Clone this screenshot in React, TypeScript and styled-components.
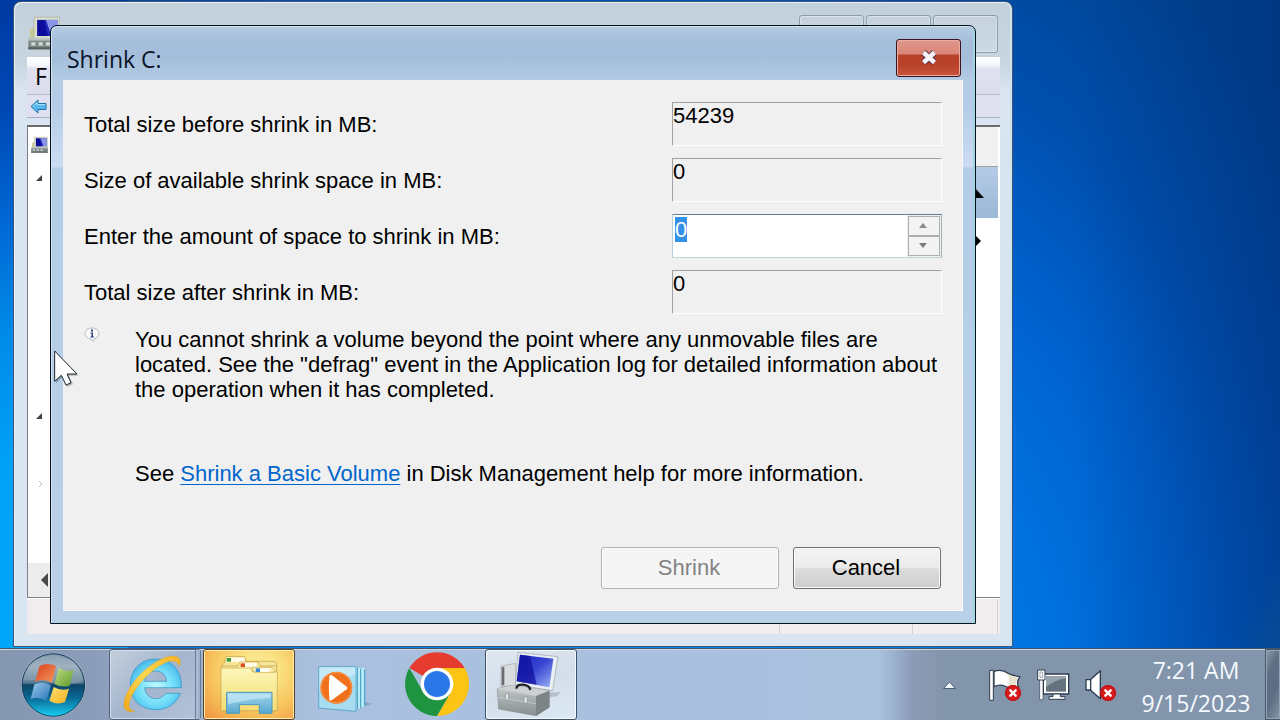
import React, { useEffect, useRef } from "react";
import styled, { createGlobalStyle } from "styled-components";

const GlobalStyle = createGlobalStyle`
  * { box-sizing: border-box; }
  body {
    margin: 0;
    font-family: "Liberation Sans", Arial, sans-serif;
    color: #000;
  }
  svg { display: block; }
`;

const uiFont = `"Open Sans", "Noto Sans", sans-serif`;
const textSize = "22px";
const lineSize = "25px";

/* ---------- desktop ---------- */

const Screen = styled.div`
  display: flex;
  flex-direction: column;
  min-height: 100vh;
  overflow: hidden;
  background:
    linear-gradient(180deg, #0039a2 0%, #0048b4 15%, #0066d2 30%, #008ae8 46%, #00a2f8 65%, #00a8fa 100%) left top / 10% 100% no-repeat,
    linear-gradient(122deg, transparent 94%, rgba(40, 110, 130, 0.35) 100%),
    linear-gradient(90deg, transparent 84%, rgba(0, 40, 110, 0.45) 100%),
    radial-gradient(ellipse 75% 130% at 45% 100%, #008cf4 0%, #007ee8 35%, #0074e0 48%, #0060cc 66%, #0050b0 80%, #004594 100%);
`;

const Desktop = styled.main`
  position: relative;
  flex: 1;
  min-height: 640px;
`;

/* ---------- management console window ---------- */

const ConsoleWindow = styled.section`
  position: absolute;
  inset: 1px 267px 1px 13px;
  display: flex;
  flex-direction: column;
  padding: 0 12px 12px 13px;
  border: 1px solid #3f5470;
  border-radius: 8px 8px 0 0;
  background: linear-gradient(180deg, #c3d1dc 0, #c8d5e1 60px, #dbe4f2 90px, #d8e5f1 140px, #d9e6f1 100%);
  box-shadow: inset 1px 1px 0 #e8f0f6, inset -2px 0 0 #d0e4f0;
`;

const ConsoleTitle = styled.header`
  display: flex;
  justify-content: space-between;
  align-items: flex-start;
  height: 55px;
  padding: 13px 2px 0 1px;
`;

const CaptionGroup = styled.div`
  display: flex;
  gap: 2px;
`;

const CaptionButton = styled.button`
  width: 65px;
  height: 38px;
  padding: 0;
  border: 1px solid #8c9db0;
  border-radius: 3px;
  background: linear-gradient(#c6d3df, #cbd8e5);
  box-shadow: inset 0 0 0 1px #d8e3ec;
`;

const MenuBar = styled.nav`
  display: flex;
  align-items: center;
  height: 38px;
  padding: 0 8px;
  border-bottom: 1px solid #b4b9cc;
  background: linear-gradient(#fff 0, #f5f7fc 8px, #e0e1ef 12px, #dcdcec 100%);
  font: 23px/32px ${uiFont};
`;

const ToolBar = styled.div`
  display: flex;
  align-items: center;
  height: 23px;
  padding: 0 3px;
  border-bottom: 1px solid #a9afc0;
  background: #dfe1f1;
`;

const Panes = styled.div`
  display: flex;
  flex: 1;
  margin-top: 7px;
  border: 1px solid #7d8085;
  border-top: 2px solid #6c6c6c;
  border-right: 0;
  background: #fff;
`;

const TreePane = styled.div`
  display: flex;
  flex-direction: column;
  justify-content: space-between;
  width: 240px;
`;

const Tree = styled.ul`
  margin: 0;
  padding: 0;
  list-style: none;
`;

const TreeRow = styled.li`
  display: flex;
  align-items: center;
  height: 34px;
  padding-left: 3px;
`;

const HorizontalScroll = styled.div`
  display: flex;
  align-items: center;
  height: 34px;
  padding-left: 12px;
  background: #ececec;
`;

const ActionsPane = styled.aside`
  width: 240px;
  margin: 0 2px 0 auto;
  background: #fff;
`;

const ActionsTitle = styled.div`
  height: 40px;
  border-bottom: 1px solid #a0a0a0;
  background: #f0f0f0;
`;

const ActionsRow = styled.div<{ $active?: boolean }>`
  display: flex;
  align-items: center;
  justify-content: flex-end;
  height: ${(p) => (p.$active ? "51px" : "45px")};
  padding-right: ${(p) => (p.$active ? "14px" : "17px")};
  background: ${(p) => (p.$active ? "linear-gradient(#b4cbe6, #9bb8d6)" : "#fff")};
`;

const StatusBar = styled.footer`
  display: grid;
  grid-template-columns: 1fr 133px 85px 2px;
  height: 36px;
  border-top: 1px solid #fff;
  background: #f1edee;
`;

const StatusCell = styled.div`
  border-right: 1px solid #d5d2d3;
`;

/* ---------- shrink dialog ---------- */

const DialogFrame = styled.section`
  position: absolute;
  top: 25px;
  left: 50px;
  right: 304px;
  padding: 0 12px 12px;
  border: 1px solid #06121e;
  border-radius: 7px 7px 0 0;
  background: linear-gradient(180deg, #b5cbe1 0, #a4bedb 16px, #a4bedb 32px, #b3cbe4 54px, #b4cce8 80px, #ccdcf2 140px, #b3cde8 143px, #bad0e8 100%);
  box-shadow: inset 1px 1px 0 #d4e3ee, inset -2px -1px 0 #a2d4e2;
`;

const DialogTitle = styled.header`
  display: flex;
  justify-content: space-between;
  align-items: flex-start;
  height: 54px;
  padding: 13px 2px 0 4px;
`;

const TitleText = styled.h1`
  margin: 4px 0 0;
  font: 400 23px/32px ${uiFont};
  color: #0a1428;
`;

const CloseButton = styled.button`
  display: flex;
  align-items: center;
  justify-content: center;
  width: 65px;
  height: 38px;
  padding: 0 0 2px;
  border: 1px solid #3c1420;
  border-radius: 3px;
  background: linear-gradient(#e0988c 0, #da8578 14px, #b8412a 15px, #b8412a 24px, #c9543c 100%);
  box-shadow: inset 0 0 0 1px #e9aca0;
`;

const DialogBody = styled.form`
  padding: 22px 21px;
  background: #f0f0f0;
  box-shadow: inset -1px -1px 0 #f8fafc;
  font-size: ${textSize};
  line-height: ${lineSize};
`;

const Fields = styled.div`
  display: grid;
  grid-template-columns: 1fr 270px;
  gap: 12px 20px;
`;

const FieldLabel = styled.label`
  align-self: center;
`;

const Readout = styled.output`
  height: 44px;
  border: 1px solid;
  border-color: #a0a0a0 #fff #fff #a0a0a0;
`;

const SpinBox = styled.div`
  display: flex;
  height: 44px;
  border: 1px solid;
  border-color: #5d7f90 #a5b0b5 #c2d5d5 #b4cdd8;
  background: #fff;
`;

const SpinInput = styled.input`
  flex: 1;
  min-width: 0;
  margin: 0;
  padding: 2px 2px 15px;
  border: 0;
  outline: 0;
  background: transparent;
  color: #000;
  font: inherit;
  caret-color: transparent;
  &::selection { background: #3391ea; color: #fff; }
`;

const SpinButtons = styled.div`
  display: grid;
  grid-template-rows: 1fr 1fr;
  width: 34px;
  padding: 1px;
  background: #f0f0f0;
`;

const SpinButton = styled.button`
  display: flex;
  align-items: center;
  justify-content: center;
  padding: 0 2px 2px 0;
  border: 1px solid #adb0b2;
  background: #f3f3f3;
`;

const Note = styled.div`
  display: grid;
  grid-template-columns: 16px 1fr;
  gap: 35px;
  margin-top: 13px;
`;

const NoteText = styled.p`
  margin: 0;
`;

const HelpText = styled.p`
  margin: 59px 0 0 51px;
`;

const HelpLink = styled.a`
  color: #0066cc;
  text-decoration: underline;
  text-decoration-thickness: 1px;
  text-underline-offset: 3px;
`;

const Actions = styled.div`
  display: flex;
  justify-content: flex-end;
  gap: 14px;
  margin: 61px 1px 0 0;
`;

const ActionButton = styled.button<{ $width: number }>`
  width: ${(p) => p.$width}px;
  height: 42px;
  padding: 0 2px 2px 0;
  border: 1px solid #707070;
  border-radius: 3px;
  background: linear-gradient(#f3f3f3 0, #ebebeb 48%, #dcdcdc 52%, #cecece 100%);
  box-shadow: inset 0 0 0 1px #fafafa;
  font: inherit;
  color: #000;
  &:disabled {
    border-color: #b0b4b6;
    background: #f5f5f5;
    color: #838383;
  }
`;

/* ---------- task bar ---------- */

const Taskbar = styled.footer`
  display: flex;
  height: 72px;
  border-top: 1px solid #45566c;
  box-shadow: inset 0 1px 0 #c9d6e2;
  background:
    linear-gradient(90deg, transparent calc(100% - 400px), #8c9cb8 calc(100% - 368px), #8395aa calc(100% - 335px), #8395ac 100%),
    linear-gradient(90deg, #8496b0 0, #8a9cb8 90px, #a0b3d0 200px, #a9c0de 320px, #a8c2de 100%);
`;

const StartButton = styled.button`
  width: 109px;
  padding: 0;
  border: 0;
  background: none;
`;

const TaskButtons = styled.div`
  display: flex;
  gap: 2px;
`;

const taskLooks = {
  plain: "background: none; border-color: transparent;",
  open: "background: linear-gradient(135deg, #c4cfdd, #a3b4cd 50%, #b4c4da); border-color: #4d607c; box-shadow: inset 0 0 0 1px #d3deea;",
  alert: "background: radial-gradient(ellipse at 60% 30%, #fbe88c 20%, #f7c55c 60%, #ef9040 100%); border-color: #5c4020; box-shadow: inset 0 0 0 1px #fff0b8;",
  active: "background: linear-gradient(160deg, #dfe8f0, #d3deeb 50%, #dce9f3); border-color: #3d5068; box-shadow: inset 0 0 0 1px #f4f9fc;",
};

const TaskButton = styled.button<{ $look: keyof typeof taskLooks }>`
  display: flex;
  justify-content: center;
  width: 92px;
  height: 71px;
  padding: 0;
  border: 1px solid;
  border-radius: 3px;
  ${(p) => taskLooks[p.$look]}
  & > svg { margin: -1px; flex: none; }
`;

const Tray = styled.div`
  display: flex;
  align-items: center;
  gap: 12px;
  margin-left: auto;
`;

const TrayButton = styled.button<{ $wide?: boolean }>`
  padding: 0;
  margin-right: ${(p) => (p.$wide ? "18px" : "0")};
  border: 0;
  background: none;
`;

const Clock = styled.time`
  width: 138px;
  margin-left: 8px;
  padding-top: 5px;
  font: 23px/33px ${uiFont};
  text-align: center;
  color: #f4faff;
`;

const ShowDesktop = styled.button`
  width: 15px;
  margin-left: 0;
  padding: 0;
  border: 1px solid #48586c;
  border-right-width: 0;
  background: linear-gradient(115deg, #8e9cac 0, #5e7084 30%, #5a6d82 60%, #8796a8 100%);
  box-shadow: inset 0 0 0 1px #94a4b5;
`;

const Pointer = styled.svg`
  position: absolute;
  left: 52px;
  top: 348px;
  pointer-events: none;
`;

/* ---------- drawings ---------- */

const ComputerIcon = ({ width, height }: { width: number; height: number }) => (
  <svg width={width} height={height} viewBox="84 50 96 100" preserveAspectRatio="none">
    <path d="M90 92l12-8v34H90z" fill="#c8cc94" />
    <path d="M102 56h76v66h-76z" fill="#d9dcc8" stroke="#a9ac9c" strokeWidth="2" />
    <path d="M112 64h62v46h-62z" fill="#2028b8" />
    <path d="M112 64h20l12 46h-32z" fill="#0c0c9a" />
    <path d="M138 64h36v46h-20z" fill="#8a94e8" />
    <path d="M85 120h94v28H85z" fill="#7e8a88" />
    <path d="M85 116h94v7H85z" fill="#b8c2c0" />
    <path d="M94 128h12v9H94zM116 128h12v9h-12zM138 128h12v9h-12z" fill="#d4dcda" />
    <path d="M85 142h94v6H85z" fill="#56605e" />
  </svg>
);

const BackIcon = () => (
  <svg width="17" height="15" viewBox="0 0 17 15">
    <path d="M1 7.500L8 1v3.500h8v6H8V14z" fill="#54b8ec" stroke="#2272a8" />
    <path d="M3 7.200l4-3.600v2h8" fill="none" stroke="#a8e4fa" />
  </svg>
);

const StartOrb = () => (
  <svg width="109" height="71" viewBox="0 27 327 213">
    <defs>
      <linearGradient id="orb" x1="0" y1="0" x2="0" y2="1">
        <stop offset="0" stopColor="#6f8ba0" />
        <stop offset=".2" stopColor="#8fa3b4" />
        <stop offset=".46" stopColor="#5c7d96" />
        <stop offset=".5" stopColor="#0e4468" />
        <stop offset=".72" stopColor="#0a6c98" />
        <stop offset="1" stopColor="#18d0f4" />
      </linearGradient>
      <linearGradient id="pr" x1="0" y1="0" x2="1" y2="1">
        <stop offset="0" stopColor="#d8401c" />
        <stop offset="1" stopColor="#f49a60" />
      </linearGradient>
      <linearGradient id="pg" x1="0" y1="0" x2="1" y2="1">
        <stop offset="0" stopColor="#c4dc88" />
        <stop offset="1" stopColor="#5a9c28" />
      </linearGradient>
      <linearGradient id="pb" x1="0" y1="0" x2="1" y2="1">
        <stop offset="0" stopColor="#9cc8ec" />
        <stop offset="1" stopColor="#2474b8" />
      </linearGradient>
      <linearGradient id="py" x1="0" y1="0" x2="1" y2="1">
        <stop offset="0" stopColor="#fce070" />
        <stop offset="1" stopColor="#f4b020" />
      </linearGradient>
    </defs>
    <circle cx="160" cy="135" r="97" fill="#b4cad8" />
    <circle cx="160" cy="135" r="94" fill="url(#orb)" stroke="#143c58" strokeWidth="3" />
    <path d="M70 122Q82 52 160 44Q238 52 250 122Q204 142 160 128Q112 116 70 122z" fill="#fff" opacity=".16" />
    <path d="M119 77Q144 66 168 78L156 128Q132 114 105 125Z" fill="url(#pr)" />
    <path d="M176 83Q198 98 221 90L209 137Q184 144 163 132Z" fill="url(#pg)" />
    <path d="M103 133Q130 122 153 136L140 183Q114 168 92 178Z" fill="url(#pb)" />
    <path d="M161 141Q184 154 207 146L195 186Q170 196 148 182Z" fill="url(#py)" />
  </svg>
);

const ExplorerEIcon = () => (
  <svg width="92" height="71" viewBox="327 27 276 213">
    <defs>
      <radialGradient id="ie" cx=".5" cy=".55" r=".6">
        <stop offset="0" stopColor="#c0f8ff" />
        <stop offset=".6" stopColor="#6fdcf8" />
        <stop offset="1" stopColor="#3cb0e4" />
      </radialGradient>
      <linearGradient id="ring" x1="0" y1="1" x2="1" y2="0">
        <stop offset="0" stopColor="#f0a818" />
        <stop offset=".5" stopColor="#fcd850" />
        <stop offset="1" stopColor="#f2b428" />
      </linearGradient>
    </defs>
    <path d="M591 29h10v208h-10z" fill="#9fb1cc" />
    <path d="M587 29v208" stroke="#5c6f8c" strokeWidth="3" />
    <path d="M591 29v208" stroke="#c8d5e4" strokeWidth="2" />
    <path
      d="M467 57C422 57 391 90 391 134C391 180 424 209 468 209C503 209 530 190 541 160H497C490 171 481 176 468 176C449 176 436 164 434 143H544C547 92 514 57 467 57ZM434 124C437 104 449 93 467 93C486 93 498 105 500 124Z"
      fill="url(#ie)"
      stroke="#2f8fc4"
      strokeWidth="2"
      fillRule="evenodd"
    />
    <path d="M405 213C385 219 370 212 372 190C376 146 432 77 492 54C522 42 543 49 541 68L538 79C534 64 518 57 496 68C449 89 396 151 388 188C384 204 391 211 405 213Z" fill="url(#ring)" stroke="#d89820" strokeWidth="1" />
  </svg>
);

const FolderIcon = () => (
  <svg width="92" height="71" viewBox="609 27 276 213">
    <defs>
      <linearGradient id="fold" x1="0" y1="0" x2="0" y2="1">
        <stop offset="0" stopColor="#fdf6b8" />
        <stop offset="1" stopColor="#f4dc74" />
      </linearGradient>
      <linearGradient id="clip" x1="0" y1="0" x2="0" y2="1">
        <stop offset="0" stopColor="#a4d8ee" />
        <stop offset="1" stopColor="#58a8d0" />
      </linearGradient>
    </defs>
    <path d="M664 80l8-10 6-20h56l4 14h82l10 4v144H664z" fill="#f6e69a" stroke="#bd9a3c" strokeWidth="2" />
    <path d="M678 52h56v14h-56z" fill="#fffbe6" />
    <path d="M680 54h13v11h-13z" fill="#3a9c30" />
    <path d="M664 78h50l6-12h54l6 12h50" fill="#fbf0aa" stroke="#bd9a3c" strokeWidth="2" />
    <path d="M722 68h48v14h-48z" fill="#fffbe6" />
    <path d="M722 70h13v11h-13z" fill="#d84c18" />
    <path d="M663 88q0-4 5-4h84l6 12h74v110q0 6-6 6H668q-5 0-5-6z" fill="url(#fold)" stroke="#c8a648" strokeWidth="2" />
    <path d="M756 82h60l10 14h-64z" fill="#fdf4bc" stroke="#c8a648" strokeWidth="2" />
    <path d="M766 85h42v11h-42z" fill="#fffdf0" />
    <path d="M767 85h13v11h-13z" fill="#3c88d0" />
    <path d="M680 157h136v63h-38v-26h-60v26h-38z" fill="url(#clip)" stroke="#4a98bc" strokeWidth="3" />
    <path d="M684 161h128v12q-66 4-128 20z" fill="#d4f0fa" opacity=".55" />
  </svg>
);

const MediaPlayerIcon = () => (
  <svg width="92" height="71" viewBox="-9 27 276 213">
    <path d="M150 215l66-24-20-4z" fill="#6f86a6" opacity=".5" />
    <path d="M168 84h27v114l-27 12z" fill="#b8ecf8" />
    <path d="M172 84v124M182 86v118M194 88v110" stroke="#3f98c0" strokeWidth="3" />
    <path d="M56 80h112v134l-112-10z" fill="#a8dcf0" stroke="#3a94bc" strokeWidth="2" />
    <path d="M58 82h108v20L58 150z" fill="#d8f4fc" opacity=".6" />
    <circle cx="109" cy="143" r="48" fill="#f0701c" />
    <circle cx="109" cy="143" r="46" fill="none" stroke="#fa9c50" strokeWidth="3" />
    <path d="M88 107q-3 36 0 72q3 4 8 1l44-32q5-4 0-8L96 106q-5-3-8 1z" fill="#fff" />
  </svg>
);

const ChromeIcon = () => (
  <svg width="92" height="71" viewBox="273 27 276 213">
    <path d="M411 132L328.140 84.160A96 96 0 0 1 494.140 84.160H411z" fill="#e63c30" />
    <path d="M411 84H494.140A96 96 0 0 1 411 228L453 156z" fill="#fcc414" />
    <path d="M411 228A96 96 0 0 1 328 84L369.430 156L411 180L452.600 156z" fill="#1f9440" />
    <circle cx="411" cy="132" r="49" fill="#fff" />
    <circle cx="411" cy="132" r="39" fill="#2a78e8" />
  </svg>
);

const ToolboxIcon = () => (
  <svg width="92" height="71" viewBox="555 27 276 213">
    <defs>
      <linearGradient id="scr" x1="0" y1="0" x2="1" y2="1">
        <stop offset="0" stopColor="#1820b8" />
        <stop offset=".5" stopColor="#3848d4" />
        <stop offset="1" stopColor="#a0b4f8" />
      </linearGradient>
      <linearGradient id="box" x1="0" y1="0" x2="0" y2="1">
        <stop offset="0" stopColor="#ccd0d2" />
        <stop offset=".4" stopColor="#acb2b4" />
        <stop offset="1" stopColor="#868e90" />
      </linearGradient>
    </defs>
    <path d="M730 160l52-4-10 12-40 8z" fill="#b4c0ce" />
    <path d="M603 78l44-8v66l-44 4z" fill="#d8dcdc" stroke="#a4abad" strokeWidth="2" />
    <path d="M605 82l8-2v56h-8z" fill="#686c70" />
    <path d="M654 37l120 13-16 102-112-18z" fill="#e8eef2" stroke="#98a4ac" strokeWidth="2" />
    <path d="M660 44l100 12-12 86-98-18z" fill="url(#scr)" />
    <path d="M660 44l30 4 20 86-60-10z" fill="#10109c" opacity=".75" />
    <path d="M592 146l44-10 112 16v50l-40 25-112-20z" fill="url(#box)" stroke="#868e90" strokeWidth="2" />
    <path d="M592 146l44-10 112 16-40 16z" fill="#ccd0d1" />
    <path d="M708 168l40-16v50l-40 25z" fill="#7c8486" />
    <path d="M594 172l114 19" fill="none" stroke="#d0d6d8" strokeWidth="2" />
    <path d="M616 160h10v20h-10zM672 170h10v20h-10z" fill="#dce0e0" stroke="#8c9294" strokeWidth="2" />
    <path d="M649 146q2-14 20-12 20 2 22 16" fill="none" stroke="#202428" strokeWidth="7" />
  </svg>
);

const ErrorBadge = ({ cx, cy }: { cx: number; cy: number }) => (
  <g>
    <circle cx={cx} cy={cy} r="24" fill="#d81c1c" />
    <circle cx={cx} cy={cy} r="22" fill="none" stroke="#b80c10" strokeWidth="3" />
    <path d={`M${cx - 8} ${cy - 8}l16 16m0-16l-16 16`} stroke="#fff" strokeWidth="7" strokeLinecap="round" />
  </g>
);

const FlagIcon = () => (
  <svg width="36" height="36" viewBox="171 84 108 108">
    <path d="M192 97q24-8 42 6q16 8 36 10q-12 16-4 32q-26 6-42-4q-16-6-32 2z" fill="#fff" stroke="#2c3c50" strokeWidth="4" strokeLinejoin="round" />
    <path d="M236 106q14 8 28 8q-8 14-4 28q-12 2-24-2z" fill="#e8e2d0" />
    <path d="M179 94h11v90h-11z" fill="#fff" stroke="#2c3c50" strokeWidth="3" />
    <ErrorBadge cx={249} cy={162} />
  </svg>
);

const NetworkIcon = () => (
  <svg width="36" height="36" viewBox="315 84 108 108">
    <path d="M340 105h76v60h-76z" fill="#fff" stroke="#2c3c50" strokeWidth="4" />
    <path d="M348 112h60v46h-60z" fill="#65727d" />
    <path d="M348 112h60v6q-30 4-60 26z" fill="#98a4ac" />
    <path d="M369 165h22v8h14v8h-48v-8h12z" fill="#fff" stroke="#2c3c50" strokeWidth="3" />
    <path d="M329 120h10v62h-10z" fill="#fff" stroke="#2c3c50" strokeWidth="2" />
    <path d="M323 93h22v30h-22z" fill="#fff" stroke="#2c3c50" strokeWidth="3" />
    <path d="M330 99h8v16h-8z" fill="#fff" stroke="#6c7c8c" strokeWidth="2" />
  </svg>
);

const SpeakerIcon = () => (
  <svg width="36" height="36" viewBox="459 84 108 108">
    <path d="M468 122h13l30-27v84l-30-26h-13z" fill="#fff" stroke="#2c3c50" strokeWidth="4" strokeLinejoin="round" />
    <path d="M482 122v32" stroke="#2c3c50" strokeWidth="4" />
    <ErrorBadge cx={534} cy={162} />
  </svg>
);

const InfoIcon = () => (
  <svg width="16" height="16" viewBox="0 0 16 16">
    <path d="M8 1C12 1 15 3.300 15 6.500C15 9.300 13 11 10.600 11.600L9.500 14.500L7 12C3.400 11.800 1 9.600 1 6.500C1 3.300 4 1 8 1z" fill="#fafafc" stroke="#b4b8c0" />
    <path d="M7 2.500h2v2H7zM6.500 5.500H9v4h1v1H6.500v-1h1v-3h-1z" fill="#2a3c78" />
  </svg>
);

const Arrow = ({ d, fill, w, h }: { d: string; fill: string; w: number; h: number }) => (
  <svg width={w} height={h} viewBox={`0 0 ${w} ${h}`}>
    <path d={d} fill={fill} />
  </svg>
);

/* ---------- data ---------- */

type RowKind = "root" | "open" | "closed" | "plain";
const treeRows: RowKind[] = ["root", "open", "plain", "plain", "plain", "plain", "plain", "plain", "open", "plain", "closed"];

const TreeGlyph = ({ kind }: { kind: RowKind }) => {
  if (kind === "root") return <ComputerIcon width={17} height={17} />;
  if (kind === "open") return <Arrow w={12} h={8} d="M11 1v6H5z" fill="#404040" />;
  if (kind === "closed")
    return (
      <svg width="14" height="8" viewBox="0 0 14 8">
        <path d="M8 1l3 3-3 3" fill="none" stroke="#b8b8b8" />
      </svg>
    );
  return null;
};

/* ---------- app ---------- */

function ManagementConsole() {
  return (
    <ConsoleWindow>
      <ConsoleTitle>
        <ComputerIcon width={32} height={35} />
        <CaptionGroup>
          <CaptionButton type="button" />
          <CaptionButton type="button" />
          <CaptionButton type="button" />
        </CaptionGroup>
      </ConsoleTitle>
      <MenuBar>F</MenuBar>
      <ToolBar>
        <BackIcon />
      </ToolBar>
      <Panes>
        <TreePane>
          <Tree>
            {treeRows.map((kind, i) => (
              <TreeRow key={i}>
                <TreeGlyph kind={kind} />
              </TreeRow>
            ))}
          </Tree>
          <HorizontalScroll>
            <Arrow w={9} h={14} d="M8 0v14L1 7z" fill="#484848" />
          </HorizontalScroll>
        </TreePane>
        <ActionsPane>
          <ActionsTitle />
          <ActionsRow $active>
            <Arrow w={18} h={10} d="M9 0l9 10H0z" fill="#000" />
          </ActionsRow>
          <ActionsRow>
            <Arrow w={6} h={12} d="M0 0l6 6-6 6z" fill="#000" />
          </ActionsRow>
        </ActionsPane>
      </Panes>
      <StatusBar>
        <StatusCell />
        <StatusCell />
        <StatusCell />
      </StatusBar>
    </ConsoleWindow>
  );
}

function ShrinkDialog() {
  const amount = useRef<HTMLInputElement>(null);

  useEffect(() => {
    amount.current?.focus();
    amount.current?.select();
  }, []);

  return (
    <DialogFrame role="dialog" aria-labelledby="shrink-title">
      <DialogTitle>
        <TitleText id="shrink-title">Shrink C:</TitleText>
        <CloseButton type="button">
          <svg width="20" height="17" viewBox="0 0 20 17">
            <path d="M4.500 3.500l11 10m0-10l-11 10" stroke="#5c3040" strokeWidth="6.500" />
            <path d="M4.500 3.500l11 10m0-10l-11 10" stroke="#f6f4fa" strokeWidth="4.500" />
          </svg>
        </CloseButton>
      </DialogTitle>
      <DialogBody onSubmit={(e) => e.preventDefault()}>
        <Fields>
          <FieldLabel htmlFor="before">Total size before shrink in MB:</FieldLabel>
          <Readout id="before">54239</Readout>
          <FieldLabel htmlFor="available">Size of available shrink space in MB:</FieldLabel>
          <Readout id="available">0</Readout>
          <FieldLabel htmlFor="amount">Enter the amount of space to shrink in MB:</FieldLabel>
          <SpinBox>
            <SpinInput id="amount" ref={amount} type="text" inputMode="numeric" defaultValue="0" />
            <SpinButtons>
              <SpinButton type="button">
                <Arrow w={8} h={5} d="M4 0l4 5H0z" fill="#8c8c8c" />
              </SpinButton>
              <SpinButton type="button">
                <Arrow w={8} h={5} d="M4 5l4-5H0z" fill="#7c7c7c" />
              </SpinButton>
            </SpinButtons>
          </SpinBox>
          <FieldLabel htmlFor="after">Total size after shrink in MB:</FieldLabel>
          <Readout id="after">0</Readout>
        </Fields>
        <Note>
          <InfoIcon />
          <NoteText>
            You cannot shrink a volume beyond the point where any unmovable files are located. See the "defrag" event in the
            Application log for detailed information about the operation when it has completed.
          </NoteText>
        </Note>
        <HelpText>
          See <HelpLink href="#help">Shrink a Basic Volume</HelpLink> in Disk Management help for more information.
        </HelpText>
        <Actions>
          <ActionButton $width={178} type="submit" disabled>
            Shrink
          </ActionButton>
          <ActionButton $width={148} type="button">
            Cancel
          </ActionButton>
        </Actions>
      </DialogBody>
    </DialogFrame>
  );
}

export default function App() {
  return (
    <Screen>
      <GlobalStyle />
      <Desktop>
        <ManagementConsole />
        <ShrinkDialog />
        <Pointer width="29" height="40" viewBox="156 84 87 120">
          <path d="M168 98v92l19-19 14 30 18-8-12-26h28z" fill="#000" opacity=".25" />
          <path d="M164 93v91l20-18 14 29 15-7-12-26h30z" fill="#fff" stroke="#18242c" strokeWidth="3" />
        </Pointer>
      </Desktop>
      <Taskbar>
        <StartButton type="button">
          <StartOrb />
        </StartButton>
        <TaskButtons>
          <TaskButton type="button" $look="open">
            <ExplorerEIcon />
          </TaskButton>
          <TaskButton type="button" $look="alert">
            <FolderIcon />
          </TaskButton>
          <TaskButton type="button" $look="plain">
            <MediaPlayerIcon />
          </TaskButton>
          <TaskButton type="button" $look="plain">
            <ChromeIcon />
          </TaskButton>
          <TaskButton type="button" $look="active">
            <ToolboxIcon />
          </TaskButton>
        </TaskButtons>
        <Tray>
          <TrayButton type="button" $wide>
            <svg width="15" height="12" viewBox="0 0 15 12">
              <path d="M7.500 3l6 6.500h-12z" fill="#f4f8fc" stroke="#4c5e76" />
            </svg>
          </TrayButton>
          <TrayButton type="button">
            <FlagIcon />
          </TrayButton>
          <TrayButton type="button">
            <NetworkIcon />
          </TrayButton>
          <TrayButton type="button">
            <SpeakerIcon />
          </TrayButton>
        </Tray>
        <Clock>
          7:21 AM
          <br />
          9/15/2023
        </Clock>
        <ShowDesktop type="button" />
      </Taskbar>
    </Screen>
  );
}
